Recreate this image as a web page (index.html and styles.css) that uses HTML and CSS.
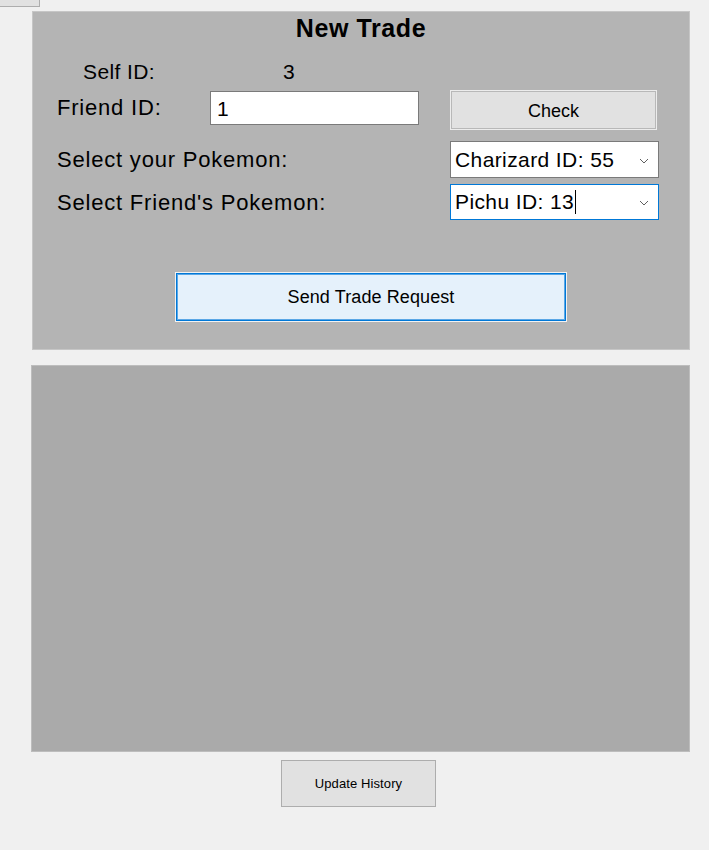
FILE: index.html
```html
<!DOCTYPE html>
<html>
<head>
<meta charset="utf-8">
<link rel="stylesheet" href="styles.css">
</head>
<body>
<div class="stub"></div>
<section class="trade">
  <h1 class="title">New Trade</h1>
  <div class="self-row">
    <span class="self-label">Self ID:</span>
    <span class="self-value">3</span>
  </div>
  <div class="form-grid">
    <label class="lbl lbl-friend">Friend ID:</label>
    <div class="textbox">1</div>
    <button class="btn btn-check">Check</button>

    <label class="lbl lbl-sel lbl-your">Select your Pokemon:</label>
    <div class="combo combo-your">
      <span class="combo-text">Charizard ID: 55</span>
      <svg class="chev" width="10" height="6" viewBox="0 0 10 6"><path d="M1 1 L5 5 L9 1" fill="none" stroke="#606060" stroke-width="1"/></svg>
    </div>

    <label class="lbl lbl-sel lbl-friends">Select Friend's Pokemon:</label>
    <div class="combo combo-focus">
      <span class="combo-text">Pichu ID: 13<span class="caret"></span></span>
      <svg class="chev" width="10" height="6" viewBox="0 0 10 6"><path d="M1 1 L5 5 L9 1" fill="none" stroke="#606060" stroke-width="1"/></svg>
    </div>
  </div>
  <button class="btn btn-send">Send Trade Request</button>
</section>
<section class="history"></section>
<div class="bottom">
  <button class="btn btn-update">Update History</button>
</div>
</body>
</html>
```
FILE: styles.css
```css
html, body {
  margin: 0;
  padding: 0;
  background: #f0f0f0;
  font-family: "Liberation Sans", Arial, sans-serif;
  color: #000;
}
.stub {
  width: 39px;
  height: 6px;
  background: #e1e1e1;
  border-right: 1px solid #adadad;
  border-bottom: 1px solid #adadad;
}
.trade {
  box-sizing: border-box;
  margin: 4px 0 0 32px;
  width: 658px;
  height: 339px;
  background: #b4b4b4;
  border: 1px solid #c6c6c6;
  padding: 1px 0 0 24px;
}
.title {
  margin: 0 0 0 -24px;
  font-size: 25px;
  line-height: 30px;
  font-weight: bold;
  text-align: center;
  letter-spacing: 0.6px;
}
.self-row {
  display: flex;
  margin-top: 17px;
  height: 24px;
  font-size: 21px;
  line-height: 24px;
  letter-spacing: 0.4px;
}
.self-label {
  margin-left: 26px;
  width: 200px;
}
.form-grid {
  display: grid;
  grid-template-columns: 153px 240px 209px;
  grid-template-rows: 40px 49px 42px;
  margin-top: 6px;
}
.lbl {
  font-size: 22px;
  line-height: 24px;
  letter-spacing: 0.8px;
  white-space: nowrap;
}
.lbl-friend { margin-top: 6px; }
.lbl-sel { grid-column: 1 / span 2; }
.lbl-your { margin-top: 18px; grid-row: 2; }
.lbl-friends { margin-top: 12px; grid-row: 3; }
.textbox {
  box-sizing: border-box;
  width: 209px;
  height: 34px;
  margin-top: 1px;
  background: #fff;
  border: 1px solid #7a7a7a;
  font-size: 21px;
  line-height: 34px;
  padding-left: 6px;
}
.btn {
  font-family: "Liberation Sans", Arial, sans-serif;
  color: #000;
  background: #e1e1e1;
  border: 1px solid #adadad;
  padding: 0;
  margin: 0;
}
.btn-check {
  box-sizing: border-box;
  width: 207px;
  height: 40px;
  font-size: 18px;
  border: 1px solid #ececec;
  box-shadow: inset 0 0 0 1px #b8b8b8;
  padding-top: 2px;
}
.combo {
  box-sizing: border-box;
  grid-column: 3;
  width: 209px;
  height: 37px;
  background: #fff;
  border: 1px solid #7a7a7a;
  display: flex;
  align-items: center;
  justify-content: space-between;
  padding: 0 9px 0 4px;
}
.combo-your { grid-row: 2; margin-top: 11px; }
.combo-focus { grid-row: 3; margin-top: 5px; border-color: #0078d7; height: 36px; }
.combo-text {
  font-size: 21px;
  letter-spacing: 0.4px;
  line-height: 24px;
  display: flex;
  align-items: center;
}
.caret {
  display: inline-block;
  width: 1px;
  height: 24px;
  background: #000;
  margin-left: 1px;
}
.chev { margin-top: 2px; }
.btn-send {
  display: block;
  box-sizing: border-box;
  width: 392px;
  height: 50px;
  margin: 51px 0 0 118px;
  background: #e5f1fb;
  border: 1px solid #f2f2f2;
  box-shadow: inset 0 0 0 1px #0078d7, inset 0 0 0 2px #5aa7e6;
  font-size: 18px;
  letter-spacing: 0.1px;
}
.history {
  box-sizing: border-box;
  margin: 15px 0 0 31px;
  width: 659px;
  height: 387px;
  background: #aaaaaa;
  border: 1px solid #bdbdbd;
}
.bottom {
  padding: 8px 0 0 281px;
}
.btn-update {
  box-sizing: border-box;
  width: 155px;
  height: 47px;
  font-size: 13px;
  letter-spacing: 0.1px;
}
```
